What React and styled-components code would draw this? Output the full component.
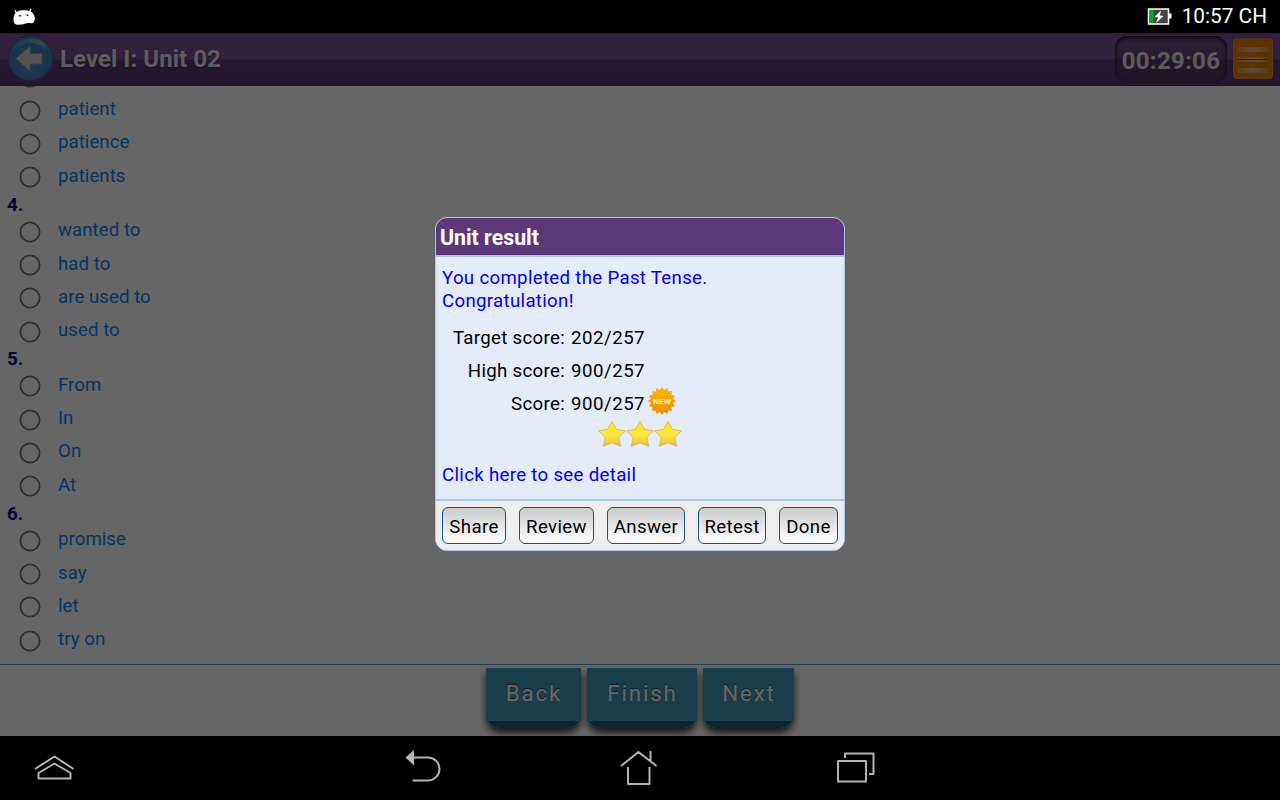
import React from "react";
import styled, { createGlobalStyle } from "styled-components";

const Global = createGlobalStyle`
  * { box-sizing: border-box; }
  body { margin: 0; background: #000; font-family: Roboto, sans-serif; overflow: hidden; }
  button { font-family: inherit; }
`;

const Screen = styled.div`
  width: 1280px;
  height: 800px;
  display: flex;
  flex-direction: column;
  background: #000;
  overflow: hidden;
`;

const StatusBar = styled.div`
  height: 33px;
  flex: none;
  display: flex;
  align-items: center;
  padding: 0 13px 0 12px;
  color: #fff;
  font-size: 20.8px;
`;

const StatusRight = styled.div`
  margin-left: auto;
  display: flex;
  align-items: center;
  gap: 10px;
  line-height: 31px;
`;

const AppArea = styled.div`
  position: relative;
  height: 703px;
  flex: none;
  display: flex;
  flex-direction: column;
  background: #fff;
  overflow: hidden;
`;

const Header = styled.header`
  height: 53px;
  flex: none;
  display: flex;
  align-items: center;
  padding: 0 7px 2px 7px;
  background: linear-gradient(#6a4285 0, #7d529a 3px, #7c5098 26px, #5f3b7b 27px, #5c3878 49px, #53316d 53px);
`;

const Title = styled.h1`
  margin: 0 auto 0 6px;
  font-size: 24px;
  font-weight: 700;
  letter-spacing: 0.05px;
  color: #e8e8e8;
  text-shadow: 0 1px 2px #40255a;
`;

const Timer = styled.div`
  width: 112px;
  height: 47px;
  margin: 2px 6px 0 0;
  padding-top: 2px;
  display: flex;
  align-items: center;
  justify-content: center;
  border-radius: 12px;
  background: linear-gradient(#6b5080, #644878 49%, #523768 50%, #4f3565);
  box-shadow: inset 0 2px 4px #20102c, inset 0 0 3px #38204a;
  color: #e6e6e6;
  font-size: 24px;
  font-weight: 700;
  letter-spacing: 0.3px;
`;

const Questions = styled.main`
  height: 578px;
  flex: none;
  overflow: hidden;
`;

const QuestionList = styled.div`
  margin-top: -25.2px;
`;

const QuestionNumber = styled.div`
  height: 21.5px;
  line-height: 22px;
  padding-left: 7px;
  font-size: 18.67px;
  font-weight: 700;
  color: #00008b;
`;

const Option = styled.label`
  height: 33.25px;
  display: flex;
  align-items: center;
  padding: 0 0 0 19px;
  color: #0888f5;
  font-size: 18.67px;
`;

const Radio = styled.svg`
  width: 22px;
  height: 22px;
  margin: 0 17px 0 0;
  fill: none;
  stroke: #767676;
  stroke-width: 1.8;
`;

const OptionText = styled.span`
  margin-top: -3px;
  line-height: 22px;
  letter-spacing: 0.04px;
`;

const Footer = styled.footer`
  height: 72px;
  flex: none;
  display: flex;
  justify-content: center;
  gap: 6px;
  padding-top: 3px;
  border-top: 1px solid #5b9bd5;
`;

const FooterButton = styled.button`
  width: ${(p) => p.$width}px;
  height: 53px;
  padding: 0 0 3px;
  border: 0;
  background: #419bbb;
  color: #fff;
  font-size: 22.4px;
  letter-spacing: 1.8px;
  text-indent: 1px;
  text-shadow: 0 -1px 1px #1b4554;
`;

const FooterKey = styled.div`
  height: 60px;
  background: linear-gradient(#419bbb 40px, #225d72 40px);
  border-radius: 0 0 14px 14px;
  box-shadow: 0 5px 7px rgba(0, 0, 0, 0.75);
`;

const Scrim = styled.div`
  position: absolute;
  inset: 0;
  background: rgba(0, 0, 0, 0.6);
`;

const Dialog = styled.section`
  position: absolute;
  left: 435px;
  top: 184px;
  width: 410px;
  height: 334px;
  display: flex;
  flex-direction: column;
  border: 1px solid #a9c7ea;
  border-radius: 12px;
  overflow: hidden;
  background: #eee;
`;

const DialogTitle = styled.h2`
  height: 39px;
  flex: none;
  margin: 0;
  padding-left: 4px;
  line-height: 39px;
  border-bottom: 2px solid #a9c7ea;
  background: #5c387b;
  color: #fff;
  font-size: 21.3px;
  font-weight: 700;
`;

const DialogBody = styled.div`
  height: 244px;
  flex: none;
  padding: 10px 6px 0;
  border-bottom: 2px solid #a9c7ea;
  background: #e4ebf9;
  font-size: 18.67px;
  line-height: 23px;
  letter-spacing: 0.31px;
`;

const Message = styled.p`
  margin: 0;
  width: 300px;
  color: #0000f0;
`;

const Scores = styled.div`
  margin-top: 9px;
`;

const ScoreRow = styled.div`
  height: 33px;
  display: grid;
  grid-template-columns: 123px 76px 28px;
  column-gap: 6px;
  align-items: center;
  color: #000;
`;

const ScoreLabel = styled.span`
  text-align: right;
`;

const ScoreValue = styled.span`
  letter-spacing: 0.5px;
`;

const NewBadge = styled.svg`
  margin: -8px 0 0 -5px;
  display: block;
`;

const Stars = styled.div`
  display: flex;
  justify-content: center;
  height: 28px;
  margin-top: -1px;
`;

const DetailLink = styled.a`
  display: block;
  margin-top: 16px;
  color: #0000f0;
`;

const DialogActions = styled.div`
  flex: 1;
  display: flex;
  justify-content: space-between;
  align-items: flex-start;
  padding: 6px 6px 0;
  background: #eee;
`;

const DialogButton = styled.button`
  width: ${(p) => p.$width}px;
  height: 37px;
  padding: 2px 0 0;
  border: 1px solid #17517a;
  border-radius: 6px;
  background: linear-gradient(#cbcbcb, #fff);
  color: #000;
  font-size: 18.67px;
  letter-spacing: 0.35px;
  white-space: nowrap;
`;

const NavBar = styled.nav`
  height: 64px;
  flex: none;
  display: grid;
  grid-template-columns: 34px 371px 215px 215px 60px;
  align-items: center;
`;

const NavIcon = styled.svg`
  display: block;
  fill: none;
  stroke: #b4b4b4;
  stroke-width: 2;
  stroke-linejoin: round;
`;

const questions = [
  { options: ["", "patient", "patience", "patients"] },
  { number: "4.", options: ["wanted to", "had to", "are used to", "used to"] },
  { number: "5.", options: ["From", "In", "On", "At"] },
  { number: "6.", options: ["promise", "say", "let", "try on"] },
];

const actions = [
  ["Share", 64],
  ["Review", 75],
  ["Answer", 78],
  ["Retest", 68],
  ["Done", 59],
];

const badgePoints = Array.from({ length: 32 }, (_, i) => {
  const r = i % 2 ? 11.3 : 14;
  const a = (i * Math.PI) / 16;
  return `${(14 + r * Math.sin(a)).toFixed(2)},${(14 - r * Math.cos(a)).toFixed(2)}`;
}).join(" ");

function AndroidIcon() {
  return (
    <svg width="24" height="20" viewBox="0 0.7 24 20">
      <path d="M3 4 L5 8 M19 2.5 L17 7" stroke="#fff" strokeWidth="1.3" />
      <path d="M1.5 13 C1.5 7 5 4.5 10 4 C17 3.2 22 5.5 22.7 11 C23.2 16 21 17.5 17.5 16.8 C13.5 17 12 18.3 7 18.5 C3 18.7 1.5 17 1.5 13Z" fill="#fff" />
      <circle cx="7.8" cy="9.5" r="1" fill="#222" />
      <circle cx="15.5" cy="9" r="1" fill="#222" />
    </svg>
  );
}

function BatteryIcon() {
  return (
    <svg width="25" height="18" viewBox="0 0 25 18">
      <rect x="1.5" y="1" width="20" height="15" fill="#444" stroke="#fff" strokeWidth="1.5" />
      <rect x="22" y="5.5" width="2.5" height="5" fill="#fff" />
      <rect x="2.5" y="2" width="4" height="13" fill="#08a51e" />
      <path d="M14 2.5 L7.5 9 L11 9.5 L9 15 L16.5 8 L12.8 7.5Z" fill="#fff" />
    </svg>
  );
}

function BackIcon() {
  return (
    <svg width="47" height="48" viewBox="0 0 47 48">
      <defs>
        <radialGradient id="backFill" cx="50%" cy="60%" r="60%">
          <stop offset="0" stopColor="#5290cb" />
          <stop offset="0.7" stopColor="#467bb8" />
          <stop offset="1" stopColor="#4c88ad" />
        </radialGradient>
        <linearGradient id="backGloss" x1="0" x2="1" y1="0" y2="0">
          <stop offset="0" stopColor="#6aa9c0" stopOpacity="0.3" />
          <stop offset="0.75" stopColor="#7bb5c8" stopOpacity="0.95" />
          <stop offset="1" stopColor="#7bb5c8" stopOpacity="0.5" />
        </linearGradient>
      </defs>
      <circle cx="23.5" cy="23.5" r="22.3" fill="url(#backFill)" stroke="#37618a" strokeWidth="1.4" />
      <path d="M8 12 C15 0.500 34 0.500 40 12 L37 14 C30 6 17 6 9 15Z" fill="url(#backGloss)" />
      <path d="M9 23.5 L23 11.500 V18.500 H35 V29 H23 V36Z" fill="#d0d0d0" stroke="#91a6b4" strokeWidth="0.8" />
    </svg>
  );
}

function MenuIcon() {
  return (
    <svg width="40" height="41" viewBox="0 0 41 41" preserveAspectRatio="none">
      <defs>
        <linearGradient id="menuLine" x1="0" x2="1" y1="0" y2="0">
          <stop offset="0" stopColor="#e6983c" />
          <stop offset="0.5" stopColor="#e5c096" />
          <stop offset="1" stopColor="#e6983c" />
        </linearGradient>
      </defs>
      <rect x="0.5" y="1" width="40" height="39.5" rx="3" fill="#e67d00" stroke="#f18f1c" strokeWidth="1" />
      <rect x="4.500" y="9" width="32" height="5" fill="url(#menuLine)" />
      <rect x="4.500" y="19" width="32" height="5" fill="url(#menuLine)" />
      <rect x="4.500" y="21" width="32" height="1" fill="#9c5708" />
      <rect x="4.500" y="30" width="32" height="5" fill="url(#menuLine)" />
    </svg>
  );
}

function Star() {
  return (
    <svg width="28" height="28" viewBox="0 0 28 28">
      <defs>
        <linearGradient id="starFill" x1="0" x2="0" y1="0" y2="1">
          <stop offset="0" stopColor="#ffe60a" />
          <stop offset="0.55" stopColor="#ffe545" />
          <stop offset="1" stopColor="#edbd2a" />
        </linearGradient>
      </defs>
      <path
        d="M14 1.2 L18.4 9.2 L27.300 10.8 L21 17.300 L22.600 26.300 L14 22.800 L5.400 26.300 L7 17.300 L0.700 10.800 L9.600 9.200Z"
        fill="url(#starFill)"
        stroke="#cfba68"
        strokeWidth="0.9"
        strokeLinejoin="round"
      />
    </svg>
  );
}

export default function App() {
  return (
    <Screen>
      <Global />
      <StatusBar>
        <AndroidIcon />
        <StatusRight>
          <BatteryIcon />
          <span>10:57 CH</span>
        </StatusRight>
      </StatusBar>
      <AppArea>
        <Header>
          <BackIcon />
          <Title>Level I: Unit 02</Title>
          <Timer>00:29:06</Timer>
          <MenuIcon />
        </Header>
        <Questions>
          <QuestionList>
            {questions.map((q, i) => (
              <div key={i}>
                {q.number && <QuestionNumber>{q.number}</QuestionNumber>}
                {q.options.map((o, j) => (
                  <Option key={j}>
                    <Radio viewBox="0 0 22 22"><circle cx="11" cy="11" r="9.6" /></Radio>
                    <OptionText>{o}</OptionText>
                  </Option>
                ))}
              </div>
            ))}
          </QuestionList>
        </Questions>
        <Footer>
          <FooterKey><FooterButton $width={95}>Back</FooterButton></FooterKey>
          <FooterKey><FooterButton $width={110}>Finish</FooterButton></FooterKey>
          <FooterKey><FooterButton $width={91}>Next</FooterButton></FooterKey>
        </Footer>
        <Scrim />
        <Dialog>
          <DialogTitle>Unit result</DialogTitle>
          <DialogBody>
            <Message>You completed the Past Tense. Congratulation!</Message>
            <Scores>
              <ScoreRow><ScoreLabel>Target score:</ScoreLabel><ScoreValue>202/257</ScoreValue></ScoreRow>
              <ScoreRow><ScoreLabel>High score:</ScoreLabel><ScoreValue>900/257</ScoreValue></ScoreRow>
              <ScoreRow>
                <ScoreLabel>Score:</ScoreLabel>
                <ScoreValue>900/257</ScoreValue>
                <NewBadge width="28" height="28" viewBox="0 0 28 28">
                  <defs>
                    <linearGradient id="badgeFill" x1="0" x2="0" y1="0" y2="1">
                      <stop offset="0" stopColor="#ffb80a" />
                      <stop offset="1" stopColor="#e69100" />
                    </linearGradient>
                  </defs>
                  <polygon points={badgePoints} fill="url(#badgeFill)" />
                  <text x="14" y="16.6" textAnchor="middle" fill="#fff4dc" fontSize="7.5" fontWeight="700" letterSpacing="0" fontFamily="Liberation Sans, sans-serif">NEW</text>
                </NewBadge>
              </ScoreRow>
            </Scores>
            <Stars><Star /><Star /><Star /></Stars>
            <DetailLink>Click here to see detail</DetailLink>
          </DialogBody>
          <DialogActions>
            {actions.map(([label, width]) => (
              <DialogButton key={label} $width={width}>{label}</DialogButton>
            ))}
          </DialogActions>
        </Dialog>
      </AppArea>
      <NavBar>
        <span />
        <NavIcon width="42" height="30" viewBox="0 0 42 30">
          <path d="M1 16 L20.5 3.5 L39.5 16 M4.5 20 L20.5 10.5 L36.5 20 V25.5 H4.5Z" />
        </NavIcon>
        <NavIcon width="38" height="38" viewBox="0 0 38 38">
          <path d="M8 8.5 H23 A11.5 11.5 0 0 1 23 31.5 H7.5" />
          <path d="M0.5 8.5 L9 1 V16.5Z" fill="#b4b4b4" stroke="none" />
        </NavIcon>
        <NavIcon width="38" height="38" viewBox="0 0 38 38">
          <path d="M1 17 L18.5 3 L36.5 17 M30.5 2 V12 M8 18 V35 H29.5 V18" />
        </NavIcon>
        <NavIcon width="40" height="38" viewBox="0 0 40 38">
          <path d="M3 12 H31 V32.5 H3Z M10 9 V4.5 H38.5 V25 H34" />
        </NavIcon>
      </NavBar>
    </Screen>
  );
}
